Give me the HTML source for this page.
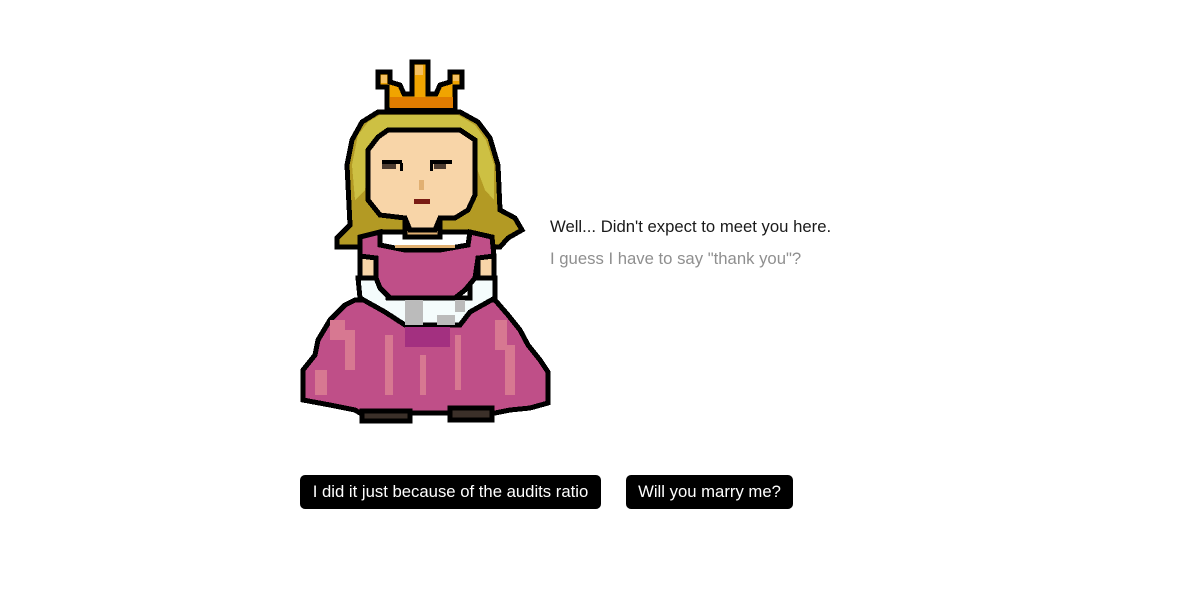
<!DOCTYPE html>
<html><head><meta charset="utf-8"><style>
html,body{margin:0;padding:0;background:#fff;width:1200px;height:595px;overflow:hidden;position:relative;font-family:"Liberation Sans",Arial,sans-serif}
svg{position:absolute;left:0;top:0}
.t1{position:absolute;left:550px;top:217px;font-size:16.7px;color:#1a1a1a}
.t2{position:absolute;left:550px;top:249px;font-size:16.7px;color:#8f8f8f}
.btn{position:absolute;top:475px;height:34px;line-height:34px;background:#000;color:#fff;font-size:16.7px;border-radius:5px;text-align:center}
</style></head><body>
<svg width="1200" height="595" viewBox="0 0 1200 595" shape-rendering="crispEdges">
<g stroke="#000" stroke-width="5" stroke-linejoin="miter">
<polygon fill="#b39a24" points="378,112 460,112 478,122 490,138 498,165 500,210 515,218 522,230 508,238 500,247 480,247 470,232 380,232 365,247 337,247 337,238 350,225 347,165 352,140 362,122"/>
<polygon stroke="none" fill="#cdc043" points="380,115 458,115 475,125 486,140 494,165 494,200 485,190 470,150 460,135 380,135 370,150 365,190 355,200 352,165 358,135 368,122"/>
<rect x="405" y="212" width="35" height="25" fill="#e1b072"/>
<polygon fill="#f8d5a8" points="388,130 460,130 475,140 475,195 468,210 455,218 440,218 435,230 410,230 405,218 380,215 368,200 368,150 378,137"/>
<polygon fill="#bf4f88" points="355,300 495,300 508,315 520,330 528,345 540,360 548,372 548,403 530,408 510,410 495,413 450,413 420,413 360,413 355,410 330,405 303,400 303,370 315,355 318,340 330,320 345,305"/>
<rect x="362" y="411" width="48" height="10" fill="#3b3029"/>
<rect x="450" y="408" width="42" height="12" fill="#3b3029"/>
<polygon fill="#f4fcfc" points="358,278 385,278 388,298 470,298 470,278 495,278 495,298 470,312 460,325 405,325 385,312 360,298"/>
<rect x="360" y="256" width="16" height="22" fill="#f8d5a8"/>
<rect x="478" y="256" width="16" height="22" fill="#f8d5a8"/>
<polygon fill="#bf4f88" points="360,237 380,232 380,245 405,250 440,250 468,245 470,232 492,237 494,256 478,258 475,278 465,290 455,298 390,298 380,288 376,278 376,258 360,256"/>
</g>
<rect x="405" y="327" width="45" height="20" fill="#a33080"/>
<g fill="#d77891">
<rect x="330" y="320" width="15" height="20"/><rect x="345" y="330" width="10" height="40"/>
<rect x="385" y="335" width="8" height="60"/><rect x="420" y="355" width="6" height="40"/>
<rect x="455" y="335" width="6" height="55"/><rect x="495" y="320" width="12" height="30"/>
<rect x="505" y="345" width="10" height="50"/><rect x="315" y="370" width="12" height="25"/>
</g>
<g fill="#bbb"><rect x="405" y="300" width="18" height="25"/><rect x="437" y="315" width="18" height="10"/><rect x="455" y="300" width="10" height="12"/></g>
<rect x="395" y="245" width="60" height="3" fill="#e1b072"/>
<rect x="382" y="160" width="20" height="4" fill="#000"/><rect x="382" y="164" width="14" height="5" fill="#4d3c30"/><rect x="400" y="163" width="3" height="8" fill="#000"/>
<rect x="430" y="160" width="22" height="4" fill="#000"/><rect x="434" y="164" width="12" height="5" fill="#4d3c30"/><rect x="430" y="163" width="3" height="8" fill="#000"/>
<rect x="419" y="180" width="5" height="10" fill="#e1b072"/>
<rect x="414" y="199" width="16" height="5" fill="#7a1c14"/>
<g stroke="#000" stroke-width="5">
<polygon fill="#f0a400" points="378,72 390,72 390,82 400,85 404,94 412,94 412,62 428,62 428,94 436,94 440,85 450,82 450,72 462,72 462,87 455,87 455,110 387,110 387,87 378,87"/>
</g>
<rect x="390" y="97" width="63" height="11" fill="#e07c00"/>
<rect x="381" y="75" width="6" height="8" fill="#f5c060"/><rect x="415" y="65" width="8" height="10" fill="#f5c060"/><rect x="453" y="75" width="6" height="6" fill="#f5c060"/>
</svg>
<div class="t1">Well... Didn't expect to meet you here.</div>
<div class="t2">I guess I have to say "thank you"?</div>
<div class="btn" style="left:300px;width:301px">I did it just because of the audits ratio</div>
<div class="btn" style="left:626px;width:167px">Will you marry me?</div>
</body></html>
